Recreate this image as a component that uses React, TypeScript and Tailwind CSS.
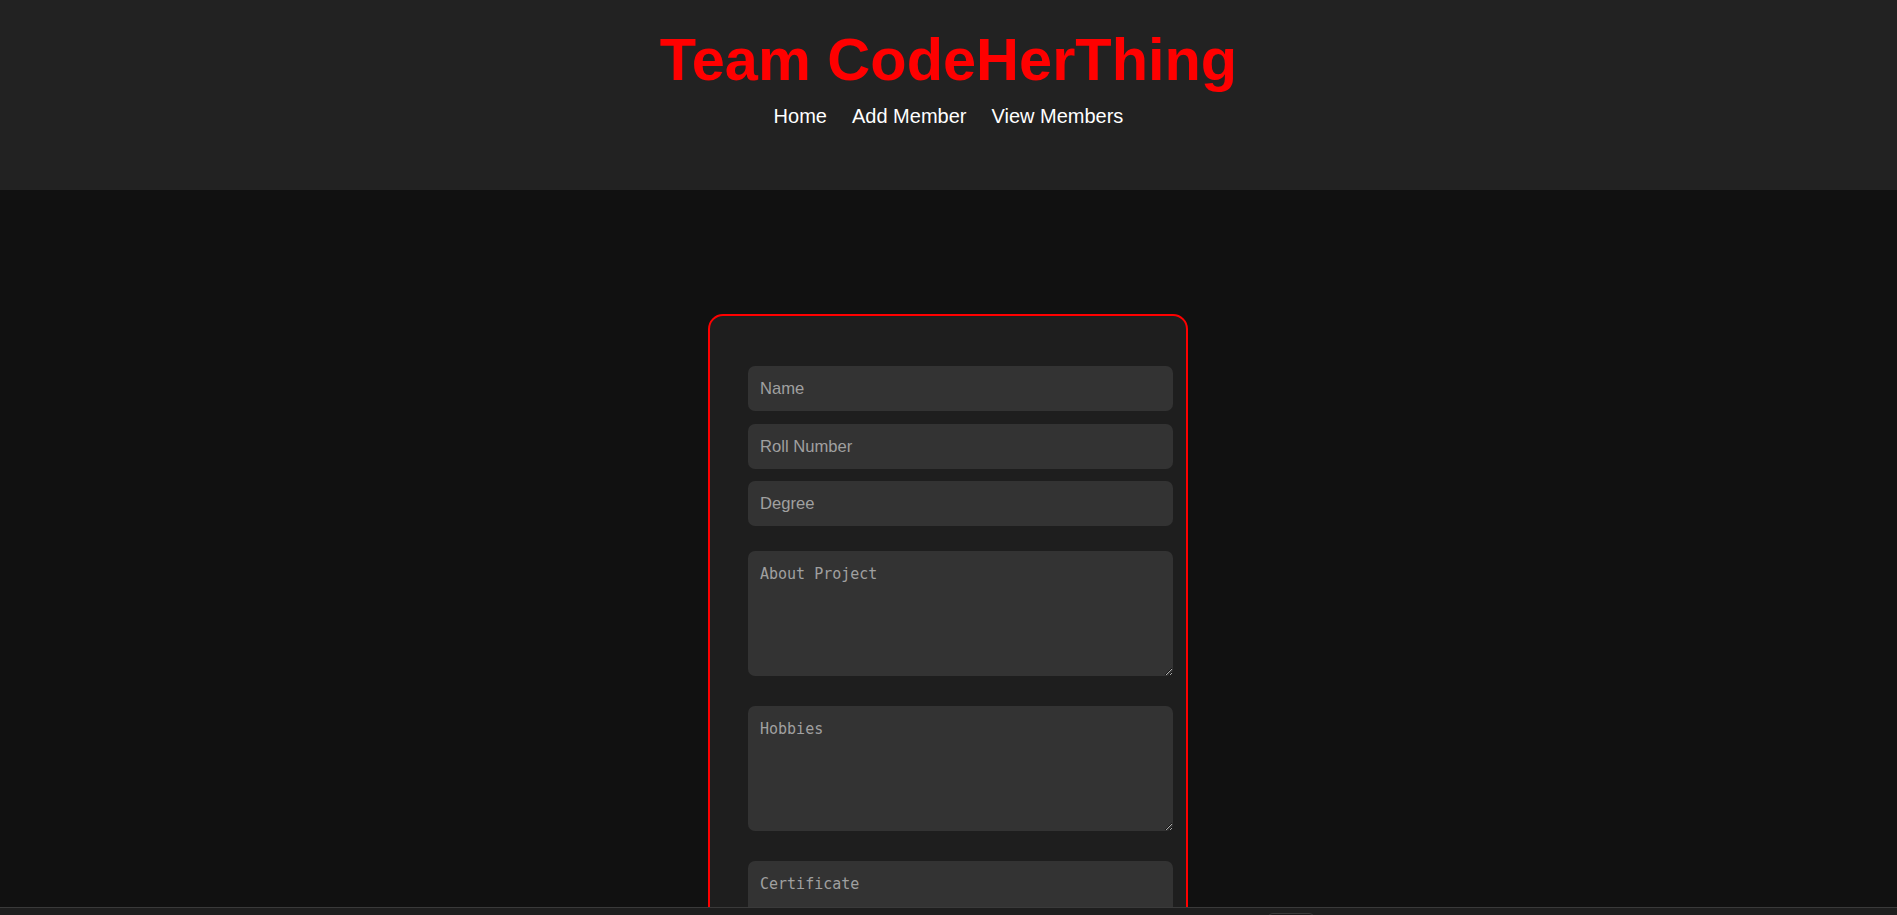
import React from "react";

export default function App() {
  return (
    <div className="min-h-screen bg-[#111111] font-['Liberation_Sans',Arial,sans-serif] text-white">
      {/* Cabeçalho */}
      <header className="h-[190px] bg-[#222222] pt-[25px] flex flex-col items-center">
        <h1 className="text-[59.5px] font-bold leading-[69px] text-[#ff0000]">
          Team CodeHerThing
        </h1>
        <nav className="mt-[11px] flex gap-[25px] text-[20px] leading-[23px]">
          <a href="#" className="text-white">Home</a>
          <a href="#" className="text-white">Add Member</a>
          <a href="#" className="text-white">View Members</a>
        </nav>
      </header>

      {/* Formulário */}
      <main className="pt-[124px] pb-[60px] flex justify-center">
        <form className="w-[480px] mr-[1px] rounded-[15px] border-2 border-[#ff0000] bg-[#1e1e1e] pt-[50px] pb-[40px] pl-[38px] pr-[13px] flex flex-col">
          <input
            placeholder="Name"
            className="h-[45px] w-full rounded-[7px] bg-[#333333] px-[12px] text-[16.6px] text-white placeholder:text-[#a0a0a0] outline-none"
          />
          <input
            placeholder="Roll Number"
            className="mt-[13px] h-[45px] w-full rounded-[7px] bg-[#333333] px-[12px] text-[16.6px] text-white placeholder:text-[#a0a0a0] outline-none"
          />
          <input
            placeholder="Degree"
            className="mt-[12px] h-[45px] w-full rounded-[7px] bg-[#333333] px-[12px] text-[16.6px] text-white placeholder:text-[#a0a0a0] outline-none"
          />
          <textarea
            placeholder="About Project"
            className="mt-[25px] h-[125px] w-full rounded-[7px] bg-[#333333] p-[12px] font-['DejaVu_Sans_Mono',monospace] text-[15px] text-white placeholder:text-[#a0a0a0] outline-none [color-scheme:dark]"
          />
          <textarea
            placeholder="Hobbies"
            className="mt-[30px] h-[125px] w-full rounded-[7px] bg-[#333333] p-[12px] font-['DejaVu_Sans_Mono',monospace] text-[15px] text-white placeholder:text-[#a0a0a0] outline-none [color-scheme:dark]"
          />
          <textarea
            placeholder="Certificate"
            className="mt-[30px] h-[125px] w-full rounded-[7px] bg-[#333333] p-[12px] font-['DejaVu_Sans_Mono',monospace] text-[15px] text-white placeholder:text-[#a0a0a0] outline-none [color-scheme:dark]"
          />
          <button
            type="button"
            className="mt-[30px] h-[45px] w-full rounded-[7px] bg-[#ff0000] text-[16px] font-bold text-white"
          >
            Add Member
          </button>
        </form>
      </main>

      {/* Barra inferior */}
      <div className="fixed left-0 right-0 top-[907px] h-[60px] border-t border-[#3a3a3a] bg-[#1e1e1e]">
        <div className="absolute left-[1267px] top-[5px] h-[30px] w-[48px] rounded-[6px] border border-[#3a3a3a] bg-[#1a1a1a]" />
      </div>
    </div>
  );
}
